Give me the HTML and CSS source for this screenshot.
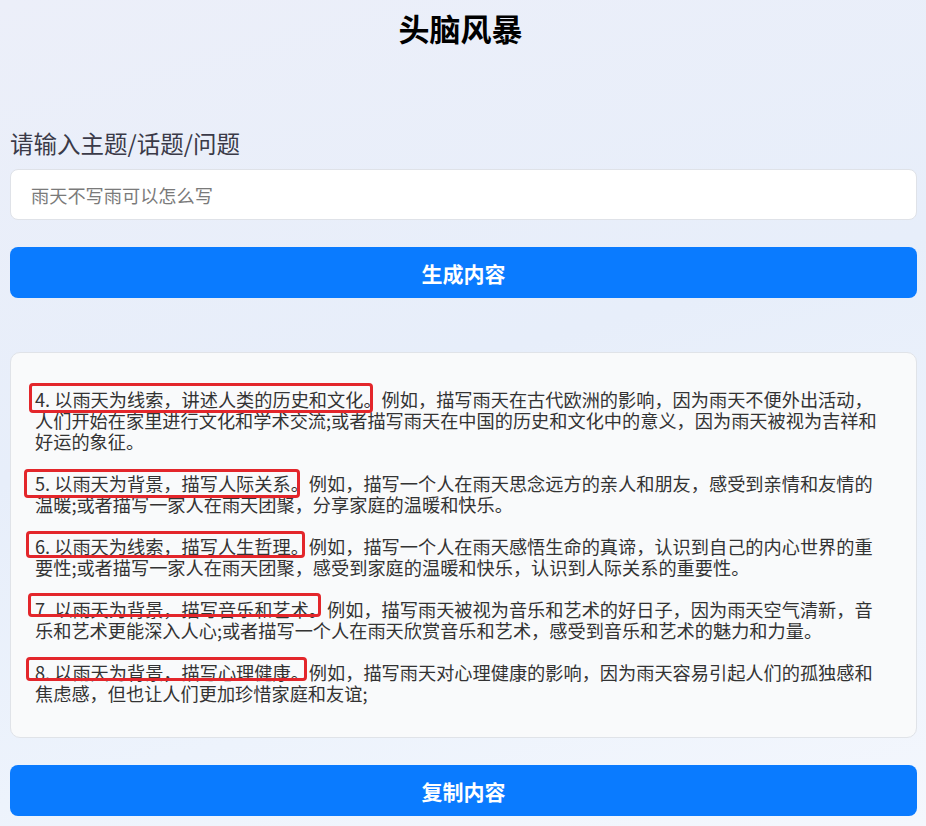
FILE: index.html
```html
<!DOCTYPE html>
<html lang="zh-CN">
<head>
<meta charset="utf-8">
<title>头脑风暴</title>
<link rel="stylesheet" href="styles.css">
</head>
<body>
<main class="page">
  <h1 class="title">头脑风暴</h1>
  <label class="label" for="topic">请输入主题/话题/问题</label>
  <input class="input" id="topic" type="text" placeholder="雨天不写雨可以怎么写">
  <button class="btn btn-generate" type="button">生成内容</button>
  <section class="card">
    <p class="para">4. 以雨天为线索，讲述人类的历史和文化。例如，描写雨天在古代欧洲的影响，因为雨天不便外出活动，人们开始在家里进行文化和学术交流;或者描写雨天在中国的历史和文化中的意义，因为雨天被视为吉祥和好运的象征。</p>
    <p class="para">5. 以雨天为背景，描写人际关系。例如，描写一个人在雨天思念远方的亲人和朋友，感受到亲情和友情的温暖;或者描写一家人在雨天团聚，分享家庭的温暖和快乐。</p>
    <p class="para">6. 以雨天为线索，描写人生哲理。例如，描写一个人在雨天感悟生命的真谛，认识到自己的内心世界的重要性;或者描写一家人在雨天团聚，感受到家庭的温暖和快乐，认识到人际关系的重要性。</p>
    <p class="para">7. 以雨天为背景，描写音乐和艺术。例如，描写雨天被视为音乐和艺术的好日子，因为雨天空气清新，音乐和艺术更能深入人心;或者描写一个人在雨天欣赏音乐和艺术，感受到音乐和艺术的魅力和力量。</p>
    <p class="para">8. 以雨天为背景，描写心理健康。例如，描写雨天对心理健康的影响，因为雨天容易引起人们的孤独感和焦虑感，但也让人们更加珍惜家庭和友谊;</p>
    <span class="mark mark-4"></span>
    <span class="mark mark-5"></span>
    <span class="mark mark-6"></span>
    <span class="mark mark-7"></span>
    <span class="mark mark-8"></span>
  </section>
  <button class="btn btn-copy" type="button">复制内容</button>
</main>
</body>
</html>
```

FILE: styles.css
```css
* {
  box-sizing: border-box;
}

html, body {
  margin: 0;
  padding: 0;
}

body {
  min-height: 826px;
  font-family: "Noto Sans CJK SC", "Noto Sans", sans-serif;
  color: #333;
  background: linear-gradient(165deg, #eceff9 0%, #e7eefa 45%, #edf3fc 75%, #f4f7fd 100%);
}

.page {
  display: flex;
  flex-direction: column;
  padding: 0 9px 0 10px;
}

.title {
  margin: 0;
  padding: 12px 6px 0 0;
  font-size: 31px;
  line-height: 32px;
  font-weight: 700;
  text-align: center;
  color: #000;
}

.label {
  margin-top: 86px;
  font-size: 23.5px;
  line-height: 26px;
  color: #3a3a48;
}

.input {
  margin-top: 13px;
  height: 51px;
  width: 100%;
  padding: 0 20px;
  border: 1px solid #dfe2e8;
  border-radius: 8px;
  background: #fff;
  font-family: "Noto Sans CJK SC", sans-serif;
  font-size: 18.2px;
  color: #333;
  outline: none;
}

.input::placeholder {
  color: #7a7a7a;
}

.btn {
  height: 51px;
  width: 100%;
  border: none;
  border-radius: 8px;
  background: #0a7bff;
  color: #fff;
  font-family: "Noto Sans CJK SC", sans-serif;
  font-size: 21px;
  font-weight: 700;
  cursor: pointer;
}

.btn-generate {
  margin-top: 27px;
}

.btn-copy {
  margin-top: 27px;
}

.card {
  position: relative;
  margin-top: 54px;
  padding: 36px 30px 33px 24px;
  border: 1px solid #e0e3e8;
  border-radius: 10px;
  background: #f9fafb;
}

.para {
  margin: 0 0 21px;
  font-size: 18.2px;
  line-height: 21px;
  color: #333;
}

.para:last-of-type {
  margin-bottom: 0;
}

.mark {
  position: absolute;
  border: 3px solid #e3262b;
  border-radius: 4px;
  pointer-events: none;
}

.mark-4 { left: 18px; top: 30px; width: 344px; height: 30px; }
.mark-5 { left: 13px; top: 116px; width: 276px; height: 29px; }
.mark-6 { left: 15px; top: 178px; width: 279px; height: 27px; }
.mark-7 { left: 17px; top: 240px; width: 293px; height: 24px; }
.mark-8 { left: 15px; top: 304px; width: 281px; height: 24px; }
```
